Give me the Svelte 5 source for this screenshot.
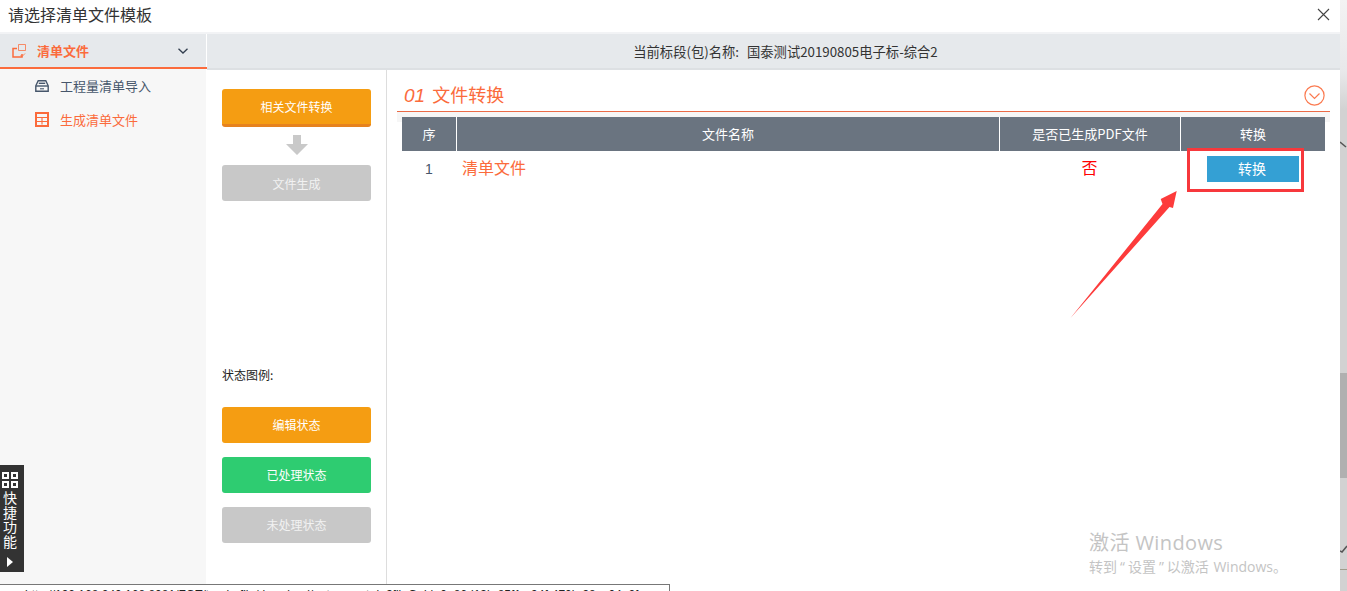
<script lang="ts">
  const columns = [
    { label: '序', width: 55 },
    { label: '文件名称', width: 543 },
    { label: '是否已生成PDF文件', width: 181 },
    { label: '转换', width: 144 }
  ];

  const legend = [
    { label: '编辑状态', kind: 'orange' },
    { label: '已处理状态', kind: 'green' },
    { label: '未处理状态', kind: 'grey' }
  ];
</script>

<div class="page">
  <div class="modal">
    <header class="title-bar">
      <span class="title">请选择清单文件模板</span>
      <svg class="close" width="13" height="13" viewBox="0 0 13 13">
        <path d="M1 1l11 11M12 1L1 12" stroke="#444" stroke-width="1.1" fill="none" />
      </svg>
    </header>

    <div class="body">
      <aside class="sidebar">
        <div class="side-head">
          <svg class="side-head-icon" width="14" height="14" viewBox="0 0 14 14" fill="none" stroke="#fb6b3c">
            <path d="M5 4.500H1V13h9V10" stroke-width="1.500" />
            <path d="M6.500.5h7v6h-7z" stroke-width="1" opacity=".75" />
            <path d="M8.500 11l1.500 1.500L13 9.500" stroke-width="1" opacity=".8" />
          </svg>
          <span class="side-head-label">清单文件</span>
          <svg class="chev" width="10" height="6" viewBox="0 0 10 6">
            <path d="M.5.7L5 5l4.5-4.3" stroke="#333f4f" stroke-width="1.3" fill="none" />
          </svg>
        </div>
        <div class="side-item">
          <svg width="14" height="12" viewBox="0 0 14 12" fill="none" stroke="#46566b" stroke-width="1.4">
            <path d="M3.200.8h7.600l2.400 5v5.400H.8V5.800z" />
            <path d="M1 6h12" />
            <path d="M3.800 3.300h6.400" />
            <path d="M5 8.800h4" stroke-width="1.100" />
          </svg>
          <span>工程量清单导入</span>
        </div>
        <div class="side-item active">
          <svg width="14" height="15" viewBox="0 0 14 15" fill="none" stroke="#fb6b3c">
            <path d="M1 1h12v13H1z" stroke-width="2" />
            <path d="M2 5.500h10M2 9.500h10M7 5.500v7" stroke-width="1.100" />
          </svg>
          <span>生成清单文件</span>
        </div>
      </aside>

      <main class="main">
        <div class="banner">当前标段(包)名称:<span class="bid-name">国泰测试20190805电子标-综合2</span></div>
        <div class="work">
          <section class="steps">
            <button class="btn orange first">相关文件转换</button>
            <svg class="down" width="22" height="20" viewBox="0 0 22 20">
              <path d="M7 0h8v9h7L11 20 0 9h7z" fill="#c9c9c9" />
            </svg>
            <button class="btn grey">文件生成</button>
            <div class="legend-label">状态图例:</div>
            <div class="legend">
              {#each legend as item}
                <button class="btn {item.kind}">{item.label}</button>
              {/each}
            </div>
          </section>

          <section class="content">
            <div class="section-head">
              <h2><i>01</i> 文件转换</h2>
              <svg width="21" height="21" viewBox="0 0 21 21" fill="none" stroke="#fb7a50" stroke-width="1.200">
                <circle cx="10.500" cy="10.500" r="9.600" />
                <path d="M5.500 8.500l5 5 5-5" />
              </svg>
            </div>
            <div class="head-strip">
              <div class="table">
                <div class="thead">
                  {#each columns as col}
                    <div class="th" style="width: {col.width}px">{col.label}</div>
                  {/each}
                </div>
                <div class="tr">
                  <div class="td num">1</div>
                  <div class="td name">清单文件</div>
                  <div class="td flag">否</div>
                  <div class="td action"><button class="convert">转换</button></div>
                </div>
              </div>
            </div>
          </section>
        </div>
      </main>
    </div>

    <div class="status-link"><span>http://192.168.240.168:8081/FGT/tenderfile/download/getconvert.do?fileGuid=0a86d13b-85f1-c94f-470b-98ca04e2f</span></div>
  </div>

  <div class="scroll-strip">
    <svg class="strip-chev" width="7" height="8" viewBox="0 0 7 8">
      <path d="M0 1l6 5" stroke="#555" stroke-width="1.500" fill="none" />
    </svg>
    <div class="thumb"></div>
    <svg class="strip-check" width="7" height="8" viewBox="0 0 7 8">
      <path d="M0 6l2 1 5-6" stroke="#555" stroke-width="1.500" fill="none" />
    </svg>
    <div class="strip-line"></div>
  </div>

  <!-- screenshot annotations -->
  <div class="mark-box"></div>
  <svg class="mark-arrow" width="106" height="129" viewBox="0 0 106 129">
    <path d="M-1.500 128L90.500 14 88.700 9 104.700 1 101 18 97.500 17z" fill="#fd3b3b" />
  </svg>

  <div class="quick">
    <svg width="16" height="16" viewBox="0 0 16 16" fill="none" stroke="#fff" stroke-width="2">
      <path d="M1 1h5v5H1zM10 1h5v5h-5zM1 10h5v5H1zM10 10h5v5h-5z" />
    </svg>
    <div class="quick-text">快<br />捷<br />功<br />能</div>
    <svg width="6" height="10" viewBox="0 0 6 10"><path d="M0 0l6 5-6 5z" fill="#fff" /></svg>
  </div>

  <div class="watermark">
    <div class="wm-big">激活 Windows</div>
    <div class="wm-small">转到<span class="q">“</span>设置<span class="q">”</span>以激活 Windows。</div>
  </div>
</div>

<style>
  :global(body) {
    margin: 0;
    background: #fff;
  }

  .page {
    position: relative;
    display: flex;
    width: 1347px;
    height: 591px;
    overflow: hidden;
    font-family: 'Noto Sans CJK SC', 'Liberation Sans', sans-serif;
  }

  .modal {
    display: flex;
    flex-direction: column;
    width: 1340px;
    background: #fff;
  }

  .title-bar {
    display: flex;
    align-items: center;
    justify-content: space-between;
    flex: none;
    height: 34px;
    padding: 0 10px 4px 8px;
    box-sizing: border-box;
    border-bottom: 2px solid #f2f3f5;
    color: #333;
    font-size: 16px;
  }

  .body {
    display: flex;
    flex: 1;
    min-height: 0;
  }

  .sidebar {
    flex: none;
    width: 206px;
    background: #f7f7f7;
  }

  .side-head {
    display: flex;
    align-items: center;
    width: 217px;
    height: 35px;
    box-sizing: border-box;
    padding: 0 17px 0 12px;
    background: linear-gradient(to right, #e6e9ec 206px, transparent 206px);
    border-bottom: 2px solid #fb6b3c;
  }

  .side-head-icon {
    margin-right: 11px;
  }

  .side-head-label {
    flex: 1;
    color: #fb6b3c;
    font-size: 13px;
    font-weight: 700;
  }

  .chev {
    margin-right: 12px;
  }

  .side-item {
    display: flex;
    align-items: center;
    gap: 11px;
    height: 33.500px;
    padding-left: 35px;
    color: #46566b;
    font-size: 13px;
  }

  .side-item.active {
    color: #fb6b3c;
  }

  .main {
    display: flex;
    flex-direction: column;
    flex: 1;
    min-width: 0;
    margin-left: 1px;
  }

  .banner {
    flex: none;
    height: 36px;
    box-sizing: border-box;
    padding-left: 24px;
    border-bottom: 2px solid #dde0e3;
    background: #e6e9ec;
    color: #333;
    font-size: 13.300px;
    line-height: 36px;
    text-align: center;
  }

  .bid-name {
    margin-left: 8px;
  }

  .work {
    display: flex;
    flex: 1;
    min-height: 0;
  }

  .steps {
    display: flex;
    flex-direction: column;
    align-items: center;
    flex: none;
    width: 180px;
    box-sizing: border-box;
    padding: 19px 15px 0 15px;
    border-right: 1px solid #ddd;
  }

  .btn {
    display: block;
    flex: none;
    width: 149.500px;
    height: 36px;
    padding: 0;
    border: 0;
    border-radius: 3px;
    color: #fff;
    font: 12px 'Noto Sans CJK SC', 'Liberation Sans', sans-serif;
  }

  .btn.first {
    height: 38px;
    border-bottom: 3px solid #e6821e;
  }

  .legend .btn {
    padding-bottom: 2px;
  }

  .orange {
    background: #f59d12;
  }

  .green {
    background: #2ecc71;
  }

  .grey {
    background: #c8c8c8;
    color: #f2f2f2;
  }

  .down {
    flex: none;
    margin: 8px 0 10px;
  }

  .legend-label {
    align-self: flex-start;
    margin-top: 165px;
    color: #222;
    font-size: 12px;
    line-height: 18px;
  }

  .legend {
    display: flex;
    flex-direction: column;
    gap: 14px;
    margin-top: 23px;
  }

  .content {
    flex: 1;
    min-width: 0;
    padding: 0 10px;
  }

  .section-head {
    display: flex;
    align-items: center;
    justify-content: space-between;
    height: 42px;
    box-sizing: border-box;
    padding: 9px 5px 0 7px;
    border-bottom: 1px solid #ea6b47;
  }

  h2 {
    margin: 0;
    color: #fb6b3c;
    font-size: 18px;
    font-weight: 400;
    line-height: 26px;
  }

  h2 i {
    font-family: 'Liberation Sans', sans-serif;
    font-size: 19px;
    margin-right: 3px;
  }

  .head-strip {
    padding: 5px 5px 0;
    background: linear-gradient(#f6f6f6 10px, transparent 10px);
  }

  .table {
    width: 923px;
  }

  .thead {
    display: flex;
    height: 34px;
    background: #6a7480;
  }

  .th {
    box-sizing: border-box;
    border-right: 1px solid #fff;
    color: #fff;
    font-size: 13px;
    line-height: 34px;
    text-align: center;
  }

  .th:last-child {
    border-right: 0;
  }

  .tr {
    display: flex;
    align-items: center;
    height: 35px;
  }

  .td.num {
    width: 55px;
    padding-right: 1px;
    box-sizing: border-box;
    color: #46566b;
    font-family: 'Liberation Sans', sans-serif;
    font-size: 14px;
    text-align: center;
  }

  .td.name {
    width: 543px;
    margin-bottom: 4px;
    padding-left: 5px;
    box-sizing: border-box;
    color: #fb6b3c;
    font-size: 16px;
  }

  .td.flag {
    width: 181px;
    margin-bottom: 4px;
    padding-right: 2px;
    box-sizing: border-box;
    color: #f00;
    font-size: 16px;
    text-align: center;
  }

  .td.action {
    display: flex;
    justify-content: center;
    width: 144px;
  }

  .convert {
    width: 92px;
    height: 26px;
    padding: 0 2px 2px 0;
    border: 0;
    background: #34a0d4;
    color: #fff;
    font: 14px 'Noto Sans CJK SC', 'Liberation Sans', sans-serif;
  }

  .status-link {
    flex: none;
    width: 670px;
    height: 7px;
    box-sizing: border-box;
    overflow: hidden;
    border-top: 1px solid #777;
    border-right: 1px solid #777;
    padding-left: 25px;
    color: #222;
    font: 12px/18px 'Liberation Sans', sans-serif;
    white-space: nowrap;
  }

  .status-link span {
    position: relative;
    top: 1px;
  }

  .scroll-strip {
    flex: none;
    position: relative;
    width: 7px;
    background: linear-gradient(#f3f3f3 0, #e8e8ea 72px, #d2d2d2 110px);
  }

  .strip-chev {
    position: absolute;
    left: 0;
    top: 141px;
  }

  .strip-check {
    position: absolute;
    left: 0;
    top: 545px;
  }

  .thumb {
    position: absolute;
    left: 0;
    top: 373px;
    width: 100%;
    height: 105px;
    background: #b0b0b0;
  }

  .strip-line {
    position: absolute;
    left: 0;
    top: 569px;
    width: 100%;
    height: 1px;
    background: #a09c8c;
  }

  .mark-box {
    position: absolute;
    left: 1187px;
    top: 148px;
    width: 117px;
    height: 44px;
    box-sizing: border-box;
    border: 3px solid #f7383c;
  }

  .mark-arrow {
    position: absolute;
    left: 1072px;
    top: 190px;
    overflow: visible;
  }

  .quick {
    position: absolute;
    left: 0;
    top: 465px;
    display: flex;
    flex-direction: column;
    align-items: center;
    width: 24px;
    height: 107px;
    box-sizing: border-box;
    padding: 7px 4px 0 0;
    background: #333;
    color: #fff;
  }

  .quick-text {
    margin: 2px 0 9px;
    font-size: 14px;
    line-height: 14.500px;
  }

  .watermark {
    position: absolute;
    left: 1089px;
    top: 529px;
    color: #c4c4c4;
    font-family: 'Open Sans', 'Noto Sans CJK SC', sans-serif;
  }

  .wm-big {
    font-size: 20px;
    line-height: 28px;
    letter-spacing: 0.4px;
  }

  .wm-small {
    font-size: 14px;
    line-height: 20px;
    word-spacing: 1px;
  }

  .q {
    padding: 0 3px;
  }
</style>
